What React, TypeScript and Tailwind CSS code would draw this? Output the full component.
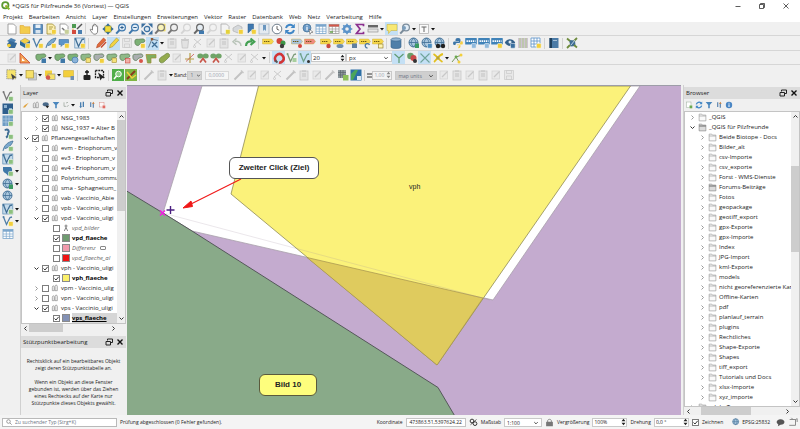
import { useState, type ReactNode } from "react";
import clsx from "clsx";

const BLUE = "#3f78ad";
const YELLOW = "#f2cf3c";
const GREEN = "#6aa84f";
const DISABLED = "#d4d4d4";

type ToolItem = "|" | "v" | "." | [glyph: string, label: string, active?: boolean];

const lens = (color: string, fill = "#e3eef8") => (
  <>
    <circle cx="7" cy="4.5" r="3.4" fill={fill} stroke={color} strokeWidth="1.2" />
    <path d="M4.6 7 1.2 10.6" stroke={color} strokeWidth="2" />
  </>
);
const badge = (color: string) => (
  <rect x="6.5" y="6.5" width="4.7" height="4.7" rx="1" fill={color} stroke="#fff" strokeWidth=".5" />
);
const sheet = (stroke = "#8a8a8a", fill = "#fff") => (
  <path d="M2 1h5.5L10 3.5V11H2z" fill={fill} stroke={stroke} strokeWidth=".8" />
);
const blob = (fill: string, extra?: ReactNode) => (
  <>
    <path d="M1 3.500C1.500 1.500 4 2.600 6 2.200s4.600-.8 4.800 1.400S8.500 5.500 7 6 5.500 9 3.300 8.500.600 6 1 3.500z" fill={fill} stroke="#5d7d58" strokeWidth=".8" />
    {extra}
  </>
);
const tag = (fill: string, extra?: ReactNode) => (
  <>
    <path d="M.5 2h9l2 2.500-2 2.500h-9z" fill={fill} stroke="#c7a42c" strokeWidth=".4" />
    <path d="M2 4.500h6" stroke="#6d5b16" strokeWidth="1.200" strokeDasharray="1.300 .6" />
    {extra}
  </>
);
const vline = (color: string, extra?: ReactNode) => (
  <>
    <path d="M1.500 2 4.500 9.500 8 2.500 10 2" fill="none" stroke={color} strokeWidth="1.300" />
    <circle cx="1.500" cy="2" r="1" fill={color} />
    {extra}
  </>
);
const globe = (extra?: ReactNode) => (
  <>
    <circle cx="5.500" cy="5.500" r="4.500" fill="#a9c6dd" stroke="#3f6d94" strokeWidth=".9" />
    <path d="M1 5.500h9M5.500 1c-3 3-3 6 0 9M5.500 1c3 3 3 6 0 9" fill="none" stroke="#3f6d94" strokeWidth=".8" />
    {extra}
  </>
);
const pencil = (fill: string, edge: string) => (
  <path d="M1.500 10.800 2.500 7.500 8.500 1l2.300 2-6 6.600z" fill={fill} stroke={edge} strokeWidth=".6" />
);
const webLabel = (color: string, b: string) => (
  <>
    <rect x=".2" y="1" width="11.600" height="6.500" rx=".6" fill={color} />
    <path d="M1.500 4.200h9" stroke="#fff" strokeWidth="1.800" strokeDasharray="1.400 .7" />
    {badge(b)}
  </>
);
const table = (color: string) => (
  <>
    <rect x="1" y="1.500" width="10" height="9" fill="#fff" stroke={color} strokeWidth=".8" />
    <path d="M1 2.700h10" stroke={color} strokeWidth="2" />
    <path d="M4.300 3v7.500M7.700 3v7.500M1 6h10M1 8.300h10" stroke={color} strokeWidth=".7" />
  </>
);

const GLYPHS: Record<string, ReactNode> = {
  page: sheet(),
  folder: <path d="M1 2.500h3.500l1 1.300H11v6.700H1z" fill="#f3cc4d" stroke="#dba532" strokeWidth=".6" />,
  save: (
    <>
      <path d="M1.500 1.500h9v9h-9z" fill="#5b8fc0" stroke="#3d6c99" strokeWidth=".7" />
      <path d="M3.500 1.500h5V5h-5z" fill="#e8f0f7" />
      <path d="M3.500 7h5v3.500h-5z" fill="#d9e4ee" />
    </>
  ),
  layout: <>{sheet("#a08a30", "#fbefb0")}<path d="M4 4h4M4 6h3" stroke="#a08a30" strokeWidth=".8" />{badge(YELLOW)}</>,
  layouts: <>{sheet()}<path d="M4 5l6 5.500" stroke="#777" strokeWidth="1.500" />{badge("#c7cf9a")}</>,
  style: (
    <>
      <rect x="1" y="1" width="4" height="4" fill="#4e9a52" />
      <rect x="1" y="7" width="4" height="4" fill="#d34a3b" />
      <path d="M6 6 11 1" stroke="#555" strokeWidth="1.500" />
      <rect x="7" y="7" width="4" height="4" fill="#4a7fb0" />
      <path d="M2 5.500v1.500" stroke="#e0a030" />
    </>
  ),
  hand: (
    <path d="M3.500 7V3.200c0-.9 1.200-.9 1.200 0V1.800c0-.9 1.300-.9 1.300 0v.400c0-.9 1.300-.8 1.300.2v1c0-.8 1.300-.8 1.300.2V8c0 2-1 3.200-2.800 3.200S3.200 10 1.300 7c-.4-.9.900-1.200 1.400-.4z" fill="#fff" stroke="#666" strokeWidth=".8" />
  ),
  pan: (
    <>
      <path d="M6 .3 8.500 3.200h-5zM6 11.700 8.500 8.800h-5zM.3 6l2.900-2.500v5zM11.700 6 8.800 3.500v5z" fill="#2f6b9e" />
      <rect x="3" y="3" width="6" height="6" fill="#f0dc3e" stroke="#8a8a3a" strokeWidth=".6" />
    </>
  ),
  zoomIn: <>{lens(BLUE)}<path d="M5.300 4.500h3.400M7 2.800v3.400" stroke="#2d5f8e" strokeWidth="1" /></>,
  zoomOut: <>{lens(BLUE)}<path d="M5.300 4.500h3.400" stroke="#2d5f8e" strokeWidth="1" /></>,
  zoomFull: (
    <>
      <path d="M.5.500h4.500L.5 5zM11.500.500v4.500L7 .500zM.5 11.500V7L5 11.500zM11.500 11.500H7L11.500 7z" fill="#3b6f9f" />
      <circle cx="6" cy="6" r="2.700" fill="#dce9f4" stroke="#3b6f9f" strokeWidth="1.200" />
    </>
  ),
  zoomSel: <><rect x="4.500" y=".8" width="7" height="7.500" fill="#f3df5a" />{lens("#777", "#faf3b8")}</>,
  zoomLayer: lens("#777", "#efefef"),
  zoomOff: lens(DISABLED, "#f2f2f2"),
  zoomLast: <>{lens("#666", "#e5edf3")}<path d="M6 7.500h5v3.500H6z" fill={BLUE} /></>,
  mapNew: <>{sheet("#a8a8a8", "#f4f4f4")}{badge("#e3d13c")}</>,
  view3d: <><path d="M1 5 6 2l4 2v4L6 10 1 8z" fill="#d5d8db" stroke="#aaa" strokeWidth=".6" />{badge(YELLOW)}</>,
  bookmark: <><path d="M3 1h5.500v9L5.700 7.500 3 10z" fill="#3f78b0" stroke="#2d5a87" strokeWidth=".5" />{badge(YELLOW)}</>,
  bookmarks: <><rect x="1" y="1" width="10" height="10" fill="#e4eaf0" stroke="#9fb0c0" strokeWidth=".7" /><path d="M5 2h3v6L6.500 6.500 5 8z" fill="#6a96bf" /></>,
  clock: <><circle cx="6" cy="6" r="4.800" fill="#fff" stroke="#6f7e8c" /><path d="M6 3v3.200l2.200 1" fill="none" stroke="#555" strokeWidth=".9" /></>,
  refresh: (
    <>
      <path d="M2 5a4.200 4.200 0 0 1 7-2M10 7a4.200 4.200 0 0 1-7 2" fill="none" stroke="#3f86c6" strokeWidth="2" />
      <path d="M10.800.800V5H6.600zM1.200 11.200V7h4.200z" fill="#3f86c6" />
    </>
  ),
  identify: (
    <>
      <circle cx="5" cy="5" r="4" fill="#6b9ac7" stroke="#3f6d94" strokeWidth=".7" />
      <path d="M5 4v3.500M5 2.200v1" stroke="#fff" strokeWidth="1.200" />
      <path d="M7 6l4 3.200-2 .300-1 1.800z" fill="#fff" stroke="#444" strokeWidth=".5" />
    </>
  ),
  table: table("#7ba6cc"),
  calc: <>{table("#999")}<path d="M1 2.500h10" stroke="#d6584a" strokeWidth="2" /><path d="M2 9h3" stroke={GREEN} strokeWidth="1.500" /></>,
  gear: (
    <>
      <circle cx="6" cy="6" r="3" fill="none" stroke="#5b93c9" strokeWidth="2.400" />
      <path d="M6 .700v1.600M6 9.700v1.600M.700 6h1.600M9.700 6h1.600M2.300 2.300l1.100 1.100M8.600 8.600l1.100 1.100M9.700 2.300 8.600 3.400M3.400 8.600 2.300 9.700" stroke="#5b93c9" strokeWidth="1.600" />
    </>
  ),
  sigma: <path d="M9.500 3.200V1.500H2.500L6 6l-3.500 4.500h7V8.800" fill="none" stroke="#8b2f8f" strokeWidth="1.700" />,
  ruler: <><rect x="1" y="2" width="10" height="2.500" fill="#666" /><rect x="1" y="6" width="10" height="3" fill="#e6e6e6" stroke="#888" strokeWidth=".6" /></>,
  tip: <path d="M1 1.500h10v6H5l-2.500 3v-3H1z" fill="#f8e873" stroke="#c9b644" strokeWidth=".6" />,
  action: <>{lens("#7b8c9b")}<circle cx="5" cy="5" r="2" fill="#7b9dbb" /></>,
  text: <><rect x="1.500" y="1.500" width="9" height="9" fill="#fafafa" stroke="#aaa" strokeWidth=".7" /><path d="M3.500 4h5M6 4v5" stroke="#666" /></>,
  manager: (
    <>
      <path d="M1 4 5 1l5 2-3 4z" fill="#4a7fb0" />
      <path d="M1 7 4 4l7 2-2 5H3z" fill="#356a99" />
      <circle cx="3" cy="8.500" r="1.800" fill={YELLOW} />
    </>
  ),
  gpkg: (
    <>
      <path d="M1 4 6 1l5 3-5 3z" fill="#f3cf48" stroke="#777" strokeWidth=".4" />
      <path d="M1 4v4l5 3V7zM11 4v4l-5 3V7z" fill="#2f6b97" />
      {badge(YELLOW)}
    </>
  ),
  shape: vline("#4f7ea6", badge(YELLOW)),
  shapeAdd: vline("#777", badge("#8cc07e")),
  feather: <><path d="M1 11C2 5 6 2 11 1 10 5 6 8 3 8.500" fill="#7ba9ce" stroke="#3f6d94" strokeWidth=".8" />{badge(YELLOW)}</>,
  featherAdd: <><path d="M1 11C2 5 6 2 11 1 10 5 6 8 3 8.500" fill="#7ba9ce" stroke="#3f6d94" strokeWidth=".8" />{badge("#8cc07e")}</>,
  scratch: <><path d="M1 2.500h9.500v5H5l-2 2v-2H1z" fill="#5c94c8" stroke="#3d6f9e" strokeWidth=".6" />{badge(YELLOW)}</>,
  virtual: <><rect x=".8" y="1" width="10" height="10" fill="#dbe8f2" stroke="#5b8bb4" strokeWidth=".7" />{vline("#3f6d94")}{badge(YELLOW)}</>,
  virtualAdd: <><rect x=".8" y="1" width="10" height="10" fill="#c3d9ea" stroke="#5b8bb4" strokeWidth=".7" />{vline("#3f6d94")}{badge("#8cc07e")}</>,
  pencils: <>{pencil("#e06a3c", "#b1421f")}<path d="M6 10.500 11 5" stroke="#c64c33" strokeWidth="1.500" /></>,
  pencil: pencil("#f3d443", "#a5932f"),
  saveOff: <path d="M1.500 1.500h9v9h-9zM3.500 1.500h5v3h-5zM3.500 7h5v3.500h-5z" fill="#e8e8e8" stroke="#cacaca" strokeWidth=".7" />,
  polyAdd: blob("#7db276", badge(YELLOW)),
  vertex: (
    <>
      <path d="M1.500 10.500 5 2l6 1.500" fill="none" stroke="#6b7f8f" />
      <rect x="3.800" y="1" width="2.400" height="2.400" fill="#8c5a3a" />
      <path d="M5 5 10.500 10.500M5 10 10 5" stroke="#3f6d94" strokeWidth="1.300" />
    </>
  ),
  off: <><rect x="2" y="2" width="7.500" height="8" fill="#e9e9e9" stroke={DISABLED} strokeWidth=".8" /><path d="M4 8 9.500 2.500" stroke="#c8c8c8" strokeWidth="1.200" /></>,
  pasteOff: <><rect x="2" y="2" width="8" height="9" fill="#e4e4e4" stroke="#c8c8c8" strokeWidth=".8" /><path d="M4 2h4M4 5h4M4 7h4" stroke="#c2c2c2" /></>,
  trashOff: <path d="M2.500 3.500h7l-.800 7.500H3.300zM2 2.500h8M5 1.300h2" fill="#e2e2e2" stroke="#c6c6c6" strokeWidth=".9" />,
  cutOff: <path d="M2 2l7 6M2 8l7-6M1.500 9.500a1 1 0 1 0 2 0 1 1 0 1 0-2 0" fill="none" stroke="#cacaca" />,
  undo: <path d="M10 9C10 5 7 4 4 4.500M5.500 1.500 2 4.700l3.500 3" fill="none" stroke="#b9c4b9" strokeWidth="1.500" />,
  redo: <path d="M2 9C2 5 5 4 8 4.500M6.500 1.500 10.300 4.700 6.500 8" fill="none" stroke="#44a053" strokeWidth="2.200" />,
  label: tag("#f5d64a"),
  diagram: <><circle cx="4.500" cy="4" r="3" fill="#d3453a" /><circle cx="8" cy="6" r="2.500" fill="#3d9648" /><circle cx="7" cy="9" r="2.200" fill="#3c3c3c" /></>,
  labelPin: tag("#a9c4df", <circle cx="9" cy="9" r="2" fill="#d2443b" />),
  labelRed: tag("#ef8a80"),
  labelA: tag("#f5d64a", <circle cx="8.500" cy="9" r="2.200" fill="#c8473c" />),
  labelB: tag("#f5d64a", <ellipse cx="7" cy="9" rx="3.500" ry="2" fill="#6f8fb0" />),
  labelC: tag("#f5d64a", <rect x="6" y="6.500" width="5" height="4.500" fill="#5f7fa0" />),
  labelD: tag("#f5d64a", <path d="M8.500 11a2.200 2.200 0 1 1 2-3" fill="none" stroke="#4c79a5" strokeWidth="1.300" />),
  labelE: tag("#f5d64a", <rect x="6.500" y="7" width="4.500" height="4" fill="#fff6b0" stroke="#8a7420" strokeWidth=".6" />),
  db: (
    <>
      <path d="M1 2.500v7.500c0 2 10 2 10 0V2.500" fill="#4f7fa9" stroke="#35618a" strokeWidth=".6" />
      <ellipse cx="6" cy="2.500" rx="5" ry="1.700" fill="#8fb3d1" stroke="#35618a" strokeWidth=".6" />
    </>
  ),
  globeSearch: globe(<rect x="7" y="6.500" width="4" height="4.500" fill="#3b9a63" />),
  globeAdd: globe(badge("#4e8fc0")),
  globeFind: globe(<><circle cx="4" cy="9" r="2.200" fill="#222" /><circle cx="9" cy="9" r="2.200" fill="#222" /></>),
  globe: globe(),
  python: (
    <>
      <path d="M6 1C3.500 1 3.500 2 3.500 4H7v.600H2C.800 4.600.800 8 2 8h1.500c0-2 1-2 2.500-2s2.500 0 2.500-2S8.500 1 6 1z" fill="#3d76a8" />
      <path d="M6 11.200c2.500 0 2.500-1 2.500-3H5v-.600h5c1.200 0 1.200-3.300 0-3.300H8.800" fill="#f5cf45" />
    </>
  ),
  webA: webLabel("#3f82b8", "#8fb9dc"),
  webB: webLabel("#3f82b8", YELLOW),
  eye: <><path d="M.800 5.500C3 1 9 1 11.200 5.500 9 10 3 10 .800 5.500z" fill="#35618a" /><circle cx="6" cy="5" r="1.500" fill="#dce8f2" />{badge("#3b6f9f")}</>,
  stripes: <><path d="M1 1h10v10H1z" fill="#cfc3d3" /><path d="M3 1v10M6 1v10M9 1v10" stroke="#b9c7a2" strokeWidth="1.500" /></>,
  grid: <><path d="M1 1h9v9H1zM4 1v9M7 1v9M1 4h9M1 7h9" fill="#fff" stroke="#5b93c9" strokeWidth=".8" />{badge(YELLOW)}</>,
  book: <><rect x="1.500" y="1" width="9" height="10" fill="#4a7aa6" /><rect x="1.500" y="1" width="2.500" height="10" fill="#1f3f5c" /><path d="M5 3.500h4" stroke="#a5c0d8" /></>,
  satellite: <><path d="M3 3l6 .500.500 5.500-5 .500z" fill="#3f6d94" /><path d="M1 1.500 4 4M11 1 8 4M1 11l3-3M8 8l3 2.500" stroke="#6e8b3d" strokeWidth="1.800" /><path d="M5 8 9 3" stroke="#b8d0e2" /></>,
  setSquare: <><path d="M1 1v10h10z" fill="#f1a254" stroke="#c8452f" strokeWidth=".8" /><path d="M3 6v3h3z" fill="#fff" /></>,
  polyA: blob("#7db276", <rect x="6.500" y="6.500" width="4.500" height="4.500" fill="#3f78a8" />),
  polyB: blob("#7db276", <circle cx="8" cy="8" r="3" fill="#8bb3d9" stroke="#4a7fb0" strokeWidth=".8" />),
  polyC: blob("#8fba88", <rect x="6" y="6" width="4.500" height="4.500" fill="#f5e27a" stroke="#a08a30" strokeWidth=".6" />),
  polyD: blob("#aaaeb0", badge(YELLOW)),
  polyE: blob("#8fba88", <rect x="6.500" y="6.500" width="4.500" height="4.500" fill="#f0b0a8" stroke="#c8453a" strokeWidth=".6" />),
  polyF: blob("#aaaeb0", <circle cx="9" cy="9" r="2" fill="#d8554a" />),
  polyG: <path d="M1 2.500h10v3.500H6v5H2.500z" fill="#7fae5c" stroke="#a08a30" strokeWidth=".7" />,
  polyH: <path d="M2 10C0 7 3 5 5 4s4-4 6-2-1 4-3 6-4 4-6 2z" fill="#94ab4e" stroke="#6f8743" strokeWidth=".8" />,
  split: <><path d="M6 1v10M1 7h9" stroke="#b5a24b" strokeWidth="1.200" /><path d="M2 9.500 10 2" stroke="#c8574a" strokeWidth=".8" /></>,
  merge: <><ellipse cx="3.300" cy="4" rx="3" ry="2.500" fill="#6fa467" /><ellipse cx="8.700" cy="4" rx="3" ry="2.500" fill="#6fa467" /><path d="M3 10.500 6 6.500l3 4" fill="none" stroke="#c8574a" strokeWidth="1.700" /></>,
  magnet: <><path d="M3 9.500C-.5 5 6-1 9.500 3.500S8 11 6 10.500" fill="none" stroke="#d23436" strokeWidth="2.600" /><path d="M2 8.500l2.500 2" stroke="#555" strokeWidth="2" /></>,
  snapV: vline("#7d9b7a", <rect x="6.500" y="6" width="4" height="4" fill="#a8cf9f" />),
  snapP: vline("#6fa08a", <circle cx="9.500" cy="9.500" r="1.500" fill="#333" />),
  topo: <path d="M1.500 2 6 6v5M6 6l4.500-4" fill="none" stroke="#5f9a72" strokeWidth="1.200" />,
  overlap: <><circle cx="4.500" cy="4" r="3.300" fill="#6aa06a" /><circle cx="7.500" cy="6" r="3" fill="#c94a4a" /><circle cx="9" cy="9" r="2" fill="#333" /></>,
  cross: <path d="M1.500 1.500l9 9M10.500 1.500l-9 9" stroke="#6fa49a" strokeWidth="1.100" />,
  crossY: <><path d="M1.500 2C5 4 7 8 10.500 10M2 10C5 8 6 3 11 2" fill="none" stroke="#e2c01f" strokeWidth="1.800" /><rect x="4.500" y="4.500" width="3" height="3" fill="#b5a13a" /></>,
  trace: <><path d="M1 10 5 5l6-2M5 5l3 5" fill="none" stroke="#7a9a5a" /><circle cx="5" cy="5" r="1.400" fill={GREEN} /><circle cx="10" cy="3" r="1.500" fill={YELLOW} /><circle cx="8" cy="10" r="1.500" fill={YELLOW} /></>,
  select: <><rect x=".8" y=".8" width="9" height="9" fill="#f6e36a" stroke="#888" strokeWidth=".8" strokeDasharray="1.500 .7" /><path d="M5 4.500l5.500 4-2.500.500-1.200 2.300z" fill="#444" /></>,
  selectForm: <><rect x="3.500" y="4" width="8" height="7" fill="#c9ced3" stroke="#999" strokeWidth=".6" /><rect x="1" y="1.500" width="7.500" height="7.500" fill="#f6e06a" stroke="#a08a30" strokeWidth=".6" /></>,
  deselect: <><rect x="1" y="1.500" width="7" height="6" fill={YELLOW} /><rect x="4" y="5" width="7" height="5.500" fill="#f6e36a" stroke="#888" strokeWidth=".6" /><circle cx="4" cy="8.500" r="2.300" fill="#d3574c" /></>,
  selectLoc: <><path d="M.5 1.500h10v6.500H.5z" fill="#f3cf3c" stroke="#c7a42c" strokeWidth=".5" /><rect x="7.500" y="7" width="3.500" height="4" fill="#6f8fb0" /></>,
  lockB: <><path d="M6 1v6M4 3h4" stroke="#111" strokeWidth="1.300" /><rect x="2.500" y="6" width="7" height="5" rx="1" fill="#222" /></>,
  cursorBox: <><path d="M1.500 1.500h8v7h-8z" fill="none" stroke="#222" strokeWidth="1.300" strokeDasharray="2 .8" /><path d="M4 3.500l7 5-3 .5-1.500 2.500z" fill="#222" /></>,
  greenLens: <><rect width="12" height="12" fill="#4fae49" /><circle cx="6.500" cy="5" r="2.800" fill="#8fce8a" stroke="#fff" /><path d="M4.500 7 2 10" stroke="#fff" strokeWidth="1.500" /></>,
  greenCheck: <><rect width="12" height="12" fill="#7fb542" /><path d="M2 10 10 2" stroke="#8a3b1f" strokeWidth="2" /><path d="M2 3l5 6 4-3" stroke="#f2cf3c" strokeWidth="1.500" /></>,
  wandOff: <><path d="M1.500 10.500 9 3" stroke="#c2c2c2" strokeWidth="2" /><path d="M8 1.500l2.500 2.500" stroke="#c6c6c6" strokeWidth="1.500" /></>,
  rasterA: <><rect x="1" y="1" width="8" height="8" fill="#8f9a9f" /><path d="M1 3.500h8M1 6h8M3.500 1v8M6 1v8" stroke="#5b656b" strokeWidth=".7" /><rect x="6" y="6" width="5.500" height="5.500" fill="#8cbf5a" /></>,
  rasterB: <><rect x=".5" y=".5" width="11" height="11" fill="#2c6fa5" /><path d="M1 5l4-4h3L3 11H1z" fill="#4aa55a" /><rect x="7" y="7" width="4" height="4" fill="#dbe8f2" /></>,
  meshDark: <><rect x=".5" y=".5" width="10.500" height="10.500" fill="#2f5f8d" /><path d="M2 2h3v3H2zM7 5h3v3H7z" fill="#8fb3d1" />{badge("#8cc07e")}</>,
  meshLight: <><rect x=".5" y=".5" width="10.500" height="10.500" fill="#6d9cc4" /><path d="M1 4h10M1 7h10M4 1v10M7 1v10" stroke="#b5cfe4" strokeWidth=".7" />{badge("#8cc07e")}</>,
  comma: <><path d="M3 2.500a2 2 0 1 1 2 3c2 0 1 3-1 4" fill="none" stroke="#3f6d94" strokeWidth="2" />{badge("#8cc07e")}</>,
  dbAdd: <><path d="M1 2h8c1.500 2 1.500 4 0 6l-3 3c-1-3-5-3-5-6z" fill="#3f78a8" />{badge("#8cc07e")}</>,
  brush: <path d="M1 9c2 0 2-2 3.500-3L10 2.500 6 8c-1 2-3 2.500-5 1z" fill="#e0a23c" />,
  group: <path d="M2 10V5c0-3 3-3 3 0v5zM6 10V3.500c0-2.500 3.500-2.500 3.500 0V10z" fill="#f0f0f0" stroke="#8a8a8a" strokeWidth="1" />,
  eyeSm: <><ellipse cx="5.500" cy="5" rx="4.500" ry="3" fill="#4a6a8a" /><path d="M5 7h6L8 11z" fill="#222" /></>,
  funnel: <path d="M1 1.500h10L7.200 6v5H4.800V6z" fill="#4a86bd" />,
  expr: <path d="M3 2v6h3M6 3l3-1M7 9l3-3" fill="none" stroke="#8f9a8f" />,
  expand: <><path d="M4 2v7M8 1v8" stroke="#4a7fb0" strokeWidth="2" /><path d="M2 8l2 3 2-3z" fill="#4a7fb0" /></>,
  collapse: <><path d="M4 2v7M8 3v7" stroke="#6b8fb5" strokeWidth="2" /><path d="M6 4l2-3 2 3z" fill="#d0803a" /></>,
  remove: <><rect x="2" y="2" width="7" height="7" fill="#fdf6f6" stroke="#d9928b" strokeWidth=".8" />{badge("#e06a62")}</>,
  addLayer: <><rect x="2" y="1.500" width="7" height="8.500" fill="#fff" stroke="#9fb09f" strokeWidth=".8" />{badge(GREEN)}</>,
  info: <><circle cx="6" cy="6" r="4.800" fill="#4a86c4" /><path d="M6 5v4M6 2.800v1.200" stroke="#fff" strokeWidth="1.500" /></>,
  satBar: <><circle cx="4" cy="4" r="2.500" fill="none" stroke="#333" strokeWidth="1.300" /><circle cx="8" cy="7.500" r="2.500" fill="none" stroke="#333" strokeWidth="1.300" /><path d="M2 9 10 2" stroke="#333" /></>,
  lock: <><rect x="1.500" y="5" width="9" height="6" rx=".5" fill="#777" /><path d="M3.500 5.500V4c0-3 5-3 5 0v1.500" fill="none" stroke="#888" strokeWidth="1.300" /></>,
  bubble: <path d="M6 1.500c7 0 7 7.500 0 7.500l-3.500 2 .600-2.500C-1 6.500 1 1.500 6 1.500z" fill="#555" />,
  log: <path d="M2 3h7v7H1.500M9 3l2-1v4M4 1l2 2" fill="none" stroke="#777" />,
  folderGrey: <path d="M1.500 1.500H5l1 1.300h4.500v7.700h-9zM1.500 4h9" fill="#fafafa" stroke="#9b9b9b" strokeWidth=".9" />,
  folderHome: <><path d="M1.500 1.500H5l1 1.300h4.500v7.700h-9z" fill="#dcdcdc" stroke="#8b8b8b" strokeWidth=".9" /><path d="M1.500 4h9" stroke="#777" strokeWidth="1.500" /></>,
  points: <><circle cx="6" cy="3" r="1.500" fill="none" stroke="#666" strokeWidth="1.200" /><path d="M3.500 10.500 6 5l2.500 5.500" fill="none" stroke="#666" strokeWidth="1.200" /></>,
};

const MENU = ["Projekt", "Bearbeiten", "Ansicht", "Layer", "Einstellungen", "Erweiterungen", "Vektor", "Raster", "Datenbank", "Web", "Netz", "Verarbeitung", "Hilfe"];

const ROW_PROJECT: ToolItem[] = [
  ["page", "Neu"], ["folder", "Öffnen"], ["save", "Speichern"], ["layout", "Neues Layout"], ["layouts", "Layouts"], ["style", "Stile"], "|",
  ["hand", "Verschieben"], ["pan", "Zur Auswahl"], ["zoomIn", "Hineinzoomen"], ["zoomOut", "Herauszoomen"], ["zoomFull", "Volle Ausdehnung"],
  ["zoomSel", "Auf Auswahl zoomen"], ["zoomLayer", "Auf Layer zoomen"], ["zoomOff", "Native Auflösung"], ["zoomLast", "Zoom zurück"], ["zoomOff", "Zoom vor"],
  ["mapNew", "Neue Kartenansicht"], ["view3d", "Neue 3D-Ansicht"], ["bookmark", "Neues Lesezeichen"], ["bookmarks", "Lesezeichen"], ["clock", "Zeitsteuerung"], ["refresh", "Aktualisieren"], "|",
  ["identify", "Objekte abfragen"], ["table", "Attributtabelle"], ["calc", "Feldrechner"], ["gear", "Werkzeugkiste"], ["sigma", "Statistik"], ["ruler", "Messen"], "v",
  ["tip", "Kartenhinweise", true], ["action", "Aktion"], "v", ["text", "Textanmerkung"], "v",
];
const ROW_EDIT: ToolItem[] = [
  ["manager", "Datenquellen"], ["gpkg", "Neues GeoPackage"], ["shape", "Neues Shapefile"], ["feather", "Neuer SpatiaLite-Layer"], ["scratch", "Temporärer Layer"], ".", ["virtual", "Virtueller Layer"], "|", ".",
  ["pencils", "Aktuelle Änderungen"], ["pencil", "Bearbeitung umschalten", true], ["saveOff", "Layeränderungen speichern"], ["polyAdd", "Polygon hinzufügen"], ["vertex", "Stützpunktwerkzeug", true], "v",
  ["pasteOff", "Attribute ändern"], ["trashOff", "Löschen"], ["cutOff", "Ausschneiden"], ["off", "Kopieren"], ["pasteOff", "Einfügen"], ["undo", "Rückgängig"], ["redo", "Wiederholen"], "|",
  ["label", "Beschriftung"], ["diagram", "Diagramme"], ".", ["labelPin", "Beschriftung anheften"], ["labelRed", "Nicht platziert"], ".",
  ["labelA", "Anheften"], ["labelB", "Anzeigen"], ["labelC", "Beschriftung verschieben"], ["labelD", "Beschriftung drehen"], ["labelE", "Beschriftung ändern"], "|",
  ["db", "DB-Verwaltung"], "|", ["globeSearch", "Metasuche"], ["globeAdd", "Dienst hinzufügen"], ["globeFind", "Dienst suchen"], "|",
  ["python", "Python-Konsole"], ["webA", "HTML-Export"], ["webA", "CSV-Export"], ["webB", "KML-Export"], ["eye", "Vorschau"], ["stripes", "Streifen"], ["grid", "Raster anlegen"], "|",
  ["book", "Handbuch"], "|", ["satellite", "GPS"],
];
const ROW_DIGITIZE: ToolItem[] = [
  ["off", "CAD"], ["setSquare", "Erweiterte Digitalisierung"], ".", ["polyA", "Objekt verschieben"], "v", ["polyA", "Objekt drehen"], ["polyB", "Vereinfachen"],
  ["polyC", "Ring hinzufügen"], ["polyD", "Teil hinzufügen"], ["polyC", "Ring füllen"], ["polyE", "Ring löschen"], ["polyF", "Teil löschen"], ["polyG", "Umformen"], ["polyH", "Versatz"],
  ["off", "Linie umkehren"], ["split", "Objekt trennen"], ["merge", "Objekte verschmelzen"], ["merge", "Attribute verschmelzen"], ["cutOff", "Symbole drehen"], ["off", "Symbole verschieben"], ["cutOff", "Kürzen"], "v", "|",
];
const ROW_SNAP: ToolItem[] = [["magnet", "Einrasten", true], ["snapV", "Einrastmodus"], ["snapP", "Stützpunkt", true]];
const ROW_TOPO: ToolItem[] = [
  ["topo", "Topologisches Bearbeiten", true], ["overlap", "Überlappung"], ["cross", "Auf Schnittpunkt einrasten", true], ["crossY", "Selbsteinrasten"], "v", ["trace", "Spurverfolgung"],
];
const ROW_SELECT: ToolItem[] = [
  ["select", "Objekte wählen"], "v", ["selectForm", "Nach Wert wählen"], "v", ["deselect", "Auswahl aufheben"], "v", ["selectLoc", "Räumlich wählen"], "|",
  ["lockB", "Sperren"], ["cursorBox", "Auswahlrahmen"], "|", ["greenLens", "Suchen"], ["greenCheck", "Prüfen"], "|", ["wandOff", "Zauberstab"], ["pasteOff", "Rasterlayer"], "v",
];
const ROW_RASTER: ToolItem[] = [
  ".", ["wandOff", "Zeichnen"], ["off", "Linie"], ["off", "Polygon"], ["cutOff", "Schnitt"], ["wandOff", "Pipette"], ["pasteOff", "Werte"], ["off", "Filter"], ["wandOff", "Radieren"],
  ["rasterA", "Rasterwerte"], ["rasterB", "Rasterfarben"], "|",
];
const ROW_MESH: ToolItem[] = [
  ["off", "Netz digitalisieren"], ["pasteOff", "Netz wählen"], ["off", "Netz umformen"], ["pasteOff", "Netz glätten"], ["off", "Netz teilen"], ["saveOff", "Netz speichern"],
];
const SIDE_TOOLS: ToolItem[] = [
  ["shapeAdd", "Vektorlayer"], ["meshDark", "Rasterlayer"], ["meshLight", "Netzlayer"], ["comma", "Textdatei"], ["featherAdd", "SpatiaLite"], ["virtualAdd", "Virtuell"],
  ["dbAdd", "PostGIS"], ["globeSearch", "WMS"], ["globe", "WCS"], ["virtualAdd", "WFS"], ["shape", "Neu"], ["table", "Tabelle"],
];
const SIDE_MENUS = [6, 7, 9, 10];

interface LayerRow {
  name: string;
  level: 0 | 1 | 2;
  checked?: boolean;
  open?: boolean;
  swatch?: string;
  icon?: string;
  style?: "bold" | "italic";
  selected?: boolean;
}

const LAYERS: LayerRow[] = [
  { name: "NSG_1982", level: 1, checked: true },
  { name: "NSG_1983", level: 1, checked: true },
  { name: "NSG_1937 = Alter B", level: 1, checked: true },
  { name: "Pflanzengesellschaften", level: 0, checked: true, open: true },
  { name: "evm - Eriophorum_v", level: 1 },
  { name: "ev3 - Eriophorum_v", level: 1 },
  { name: "ev4 - Eriophorum_v", level: 1 },
  { name: "Polytrichum_commu", level: 1 },
  { name: "sma - Sphagnetum_", level: 1 },
  { name: "vab - Vaccinio_Abie", level: 1 },
  { name: "vpb - Vaccinio_uligi", level: 1 },
  { name: "vpd - Vaccinio_uligi", level: 1, checked: true, open: true },
  { name: "vpd_bilder", level: 2, icon: "points", style: "italic" },
  { name: "vpd_flaeche", level: 2, checked: true, swatch: "bg-[#6f9b71]", style: "bold" },
  { name: "Differenz", level: 2, swatch: "bg-[#f29bad]", style: "italic" },
  { name: "vpd_flaeche_al", level: 2, swatch: "bg-[#f01414]", style: "italic" },
  { name: "vph - Vaccinio_uligi", level: 1, checked: true, open: true },
  { name: "vph_flaeche", level: 2, checked: true, swatch: "bg-[#fbf06a]", style: "bold" },
  { name: "vpm - Vaccinio_ulig", level: 1 },
  { name: "vpn - Vaccinio_uligi", level: 1 },
  { name: "vps - Vaccinio_uligi", level: 1, checked: true, open: true },
  { name: "vps_flaeche", level: 2, checked: true, swatch: "bg-[#8391b5]", style: "bold", selected: true },
];

const FOLDERS = [
  "Beide Biotope - Docs", "Bilder_alt", "csv-Importe", "csv_exporte", "Forst - WMS-Dienste", "Forums-Beiträge", "Fotos", "geopackage",
  "geotiff_export", "gpx-Exporte", "gpx-Importe", "Index", "JPG-Import", "kml-Exporte", "models", "nicht georeferenzierte Kar", "Offline-Karten",
  "pdf", "planlauf_terrain", "plugins", "Rechtliches", "Shape-Exporte", "Shapes", "tiff_export", "Tutorials und Docs", "xlsx-Importe", "xyz_importe",
];

function Glyph({ name, className = "size-[12px]" }: { name: string; className?: string }) {
  return (
    <svg viewBox="0 0 12 12" className={clsx("shrink-0", className)} fill="none" aria-hidden="true">
      {GLYPHS[name]}
    </svg>
  );
}

function Tools({ items }: { items: ToolItem[] }) {
  return (
    <>
      {items.map((item, i) => {
        if (item === "|") return <span key={i} className="mx-[2px] h-[11px] w-px shrink-0 bg-[#d2d2d2]" />;
        if (item === ".") return <span key={i} className="w-[3px] shrink-0" />;
        if (item === "v") return <Arrow key={i} />;
        const [glyph, label, active] = item;
        return (
          <button
            key={i}
            type="button"
            aria-label={label}
            className={clsx("grid h-[13px] w-[13px] shrink-0 place-items-center", active && "bg-[#c4e0f5]")}
          >
            <Glyph name={glyph} />
          </button>
        );
      })}
    </>
  );
}

function Arrow() {
  return (
    <svg viewBox="0 0 6 6" className="size-[6px] shrink-0" aria-hidden="true">
      <path d="M1 2h4L3 4.500z" fill="#111" />
    </svg>
  );
}

function Chevron({ dir, className = "size-[7px]" }: { dir: "right" | "down" | "up" | "left"; className?: string }) {
  const paths = { right: "M2.500 1.500 4.500 3.500 2.500 5.500", left: "M4.500 1.500 2.500 3.500 4.500 5.500", down: "M1.500 2.500 3.500 4.500 5.500 2.500", up: "M1.500 4.500 3.500 2.500 5.500 4.500" };
  return (
    <svg viewBox="0 0 7 7" className={clsx("shrink-0", className)} fill="none" aria-hidden="true">
      <path d={paths[dir]} stroke={dir === "right" ? "#999" : "#333"} strokeWidth="1" />
    </svg>
  );
}

function Spin({ label, value, className, disabled }: { label: string; value: string; className: string; disabled?: boolean }) {
  return (
    <span className={clsx("flex h-[9px] shrink-0 items-center border border-[#c9c9c9]", disabled ? "bg-[#f4f4f4] text-gray-400" : "bg-white", className)}>
      <input aria-label={label} defaultValue={value} disabled={disabled} className="w-full min-w-0 flex-1 bg-transparent px-px outline-none" />
      <svg viewBox="0 0 5 8" className="h-[8px] w-[5px] shrink-0" aria-hidden="true">
        <path d="M.5 3.200 2.500.800l2 2.400zM.5 4.800h4l-2 2.400z" fill={disabled ? "#888" : "#222"} />
      </svg>
    </span>
  );
}

function Picker({ label, options, className, disabled }: { label: string; options: string[]; className: string; disabled?: boolean }) {
  return (
    <span className={clsx("grid h-[9px] shrink-0 items-center border border-[#c9c9c9]", disabled ? "bg-[#cfcfcf] text-gray-500" : "bg-white", className)}>
      <select aria-label={label} disabled={disabled} className="col-start-1 row-start-1 w-full appearance-none bg-transparent px-[2px] outline-none">
        {options.map((o) => <option key={o}>{o}</option>)}
      </select>
      <Chevron dir="down" className="pointer-events-none col-start-1 row-start-1 mr-[2px] size-[6px] justify-self-end" />
    </span>
  );
}

function Tick({ label, checked = false }: { label: string; checked?: boolean }) {
  const [on, setOn] = useState(checked);
  return (
    <span className="grid shrink-0 place-items-center">
      <input
        type="checkbox"
        aria-label={label}
        checked={on}
        onChange={() => setOn(!on)}
        className="col-start-1 row-start-1 size-[7px] appearance-none border border-[#7d7d7d] bg-white"
      />
      {on && (
        <svg viewBox="0 0 7 7" className="pointer-events-none col-start-1 row-start-1 size-[7px]" fill="none" aria-hidden="true">
          <path d="M1.500 3.500 3 5l2.700-3.200" stroke="#222" strokeWidth=".9" />
        </svg>
      )}
    </span>
  );
}

function DockTitle({ title }: { title: string }) {
  return (
    <div className="flex h-[12px] shrink-0 items-center bg-[#dcdcdc] px-[2px] text-[6px]">
      <h2 className="flex-1">{title}</h2>
      <button type="button" aria-label={`${title} lösen`} className="mr-[3px]">
        <svg viewBox="0 0 8 8" className="size-[8px]" fill="none" stroke="#222" aria-hidden="true">
          <path d="M2.500 2.500v-1.500h5v3.500h-2M1 3.500h4.500v3.500H1z" />
        </svg>
      </button>
      <button type="button" aria-label={`${title} schließen`}>
        <svg viewBox="0 0 8 8" className="size-[8px]" stroke="#111" strokeWidth="1.400" aria-hidden="true">
          <path d="M1.500 1.500l5 5M6.500 1.500l-5 5" />
        </svg>
      </button>
    </div>
  );
}

function VScroll({ thumb }: { thumb: string }) {
  return (
    <div className="flex w-[8px] shrink-0 flex-col items-center bg-[#f0f0f0] py-px">
      <Chevron dir="up" />
      <div className="flex w-full flex-1 flex-col">
        <div className={clsx("w-full bg-[#cdcdcd]", thumb)} />
      </div>
      <Chevron dir="down" />
    </div>
  );
}

function HScroll({ thumb }: { thumb: string }) {
  return (
    <div className="flex h-[8px] shrink-0 items-center bg-[#f0f0f0] px-px">
      <Chevron dir="left" />
      <div className="flex h-full flex-1">
        <div className={clsx("h-full bg-[#cdcdcd]", thumb)} />
      </div>
      <svg viewBox="0 0 7 7" className="mr-[8px] size-[7px]" fill="none" aria-hidden="true">
        <path d="M2.500 1.500 4.500 3.500 2.500 5.500" stroke="#333" />
      </svg>
    </div>
  );
}

function LayerItem({ row }: { row: LayerRow }) {
  return (
    <li className={clsx("flex h-[10px] shrink-0 items-center gap-[2px] whitespace-nowrap", row.level === 0 && "pl-px", row.level === 1 && "pl-[11px]", row.level === 2 && "pl-[31px]")}>
      {row.level < 2 && <Chevron dir={row.open ? "down" : "right"} />}
      <Tick label={row.name} checked={row.checked} />
      {row.swatch ? <span className={clsx("size-[8px] shrink-0 border border-[#8a8a8a]", row.swatch)} /> : <Glyph name={row.icon ?? "group"} className="size-[8px]" />}
      <span
        className={clsx(
          "leading-[10px]",
          row.style === "bold" && "font-bold text-black",
          row.style === "italic" && "italic text-[#666]",
          row.selected && "flex-1 bg-[#d6d6d6] underline"
        )}
      >
        {row.name}
      </span>
      {row.name === "Differenz" && <span className="ml-[2px] h-[4px] w-[6px] rounded-[1px] border border-[#888]" />}
    </li>
  );
}

function FolderItem({ name, nested, open, home }: { name: string; nested?: boolean; open?: boolean; home?: boolean }) {
  return (
    <li className={clsx("flex h-[10px] shrink-0 items-center gap-[2px] whitespace-nowrap", nested ? "pl-[14px]" : "pl-[4px]")}>
      <Chevron dir={open ? "down" : "right"} />
      <Glyph name={home ? "folderHome" : "folderGrey"} className="size-[9px]" />
      <span className="leading-[10px]">{name}</span>
    </li>
  );
}

function MapCanvas() {
  return (
    <main className="relative min-w-0 flex-1 overflow-hidden border-t border-[#9d9da8] bg-[#c4abcf] font-['Liberation_Sans',sans-serif] text-[#222]">
      <svg viewBox="0 0 554 329" preserveAspectRatio="xMinYMin slice" className="absolute inset-0 size-full" aria-hidden="true">
        <path d="M75 0 36 127 65 145 366 214 513 0z" fill="#fff" stroke="#a8a0ab" strokeWidth=".8" />
        <path d="M131.500 0 104 108 310 279 503.500 0z" fill="#fbf27a" stroke="#8f8a55" strokeWidth=".8" />
        <path d="M180 171.500 310 279 356 212z" fill="#dfcb5e" stroke="#a3914f" strokeWidth=".7" />
        <path d="M36 127 363 214" stroke="#a08ca0" strokeOpacity=".3" strokeWidth=".7" fill="none" />
        <path d="M-2 104 36 127 65 145 311 301.500 329 332H-2z" fill="#89aa89" stroke="#55585a" strokeWidth="1" />
        <path d="M114 93 62 119" stroke="#f01818" strokeWidth="1.200" />
        <path d="M56 122l8-7 1.500 5.500z" fill="#f01818" stroke="#f01818" />
        <path d="M33 124.500l5 5M38 124.500l-5 5" stroke="#f020e0" strokeWidth="1.600" />
        <path d="M39.500 124h8M43.500 120v8" stroke="#4a1f80" strokeWidth="1.400" />
      </svg>
      <span className="absolute left-[282px] top-[96px] text-[7px] leading-[10px]">vph</span>
      <div className="absolute left-[102px] top-[71px] flex h-[22px] w-[90px] items-center justify-center rounded-[6px] border border-[#555] bg-white text-[8px] font-bold">
        Zweiter Click (Ziel)
      </div>
      <div className="absolute left-[132px] top-[288px] flex h-[22px] w-[58px] items-center justify-center rounded-[6px] border border-[#5a5a3c] bg-[#fefe7d] text-[8px] font-bold">
        Bild 10
      </div>
    </main>
  );
}

export default function App() {
  return (
    <div className="flex h-screen flex-col overflow-hidden bg-[#f0f0f0] font-['Open_Sans','Noto_Sans',sans-serif] text-[6px] leading-[8px] text-[#222]">
      <header className="shrink-0 bg-white">
        <div className="flex h-[11px] items-center pl-px pr-[10px]">
          <svg viewBox="0 0 10 10" className="size-[9px]" fill="none" aria-hidden="true">
            <circle cx="4.800" cy="4.800" r="3.500" stroke="#5c9a32" strokeWidth="2" />
            <path d="M5 5l4.300 4.300" stroke="#88b832" strokeWidth="2.200" />
            <path d="M5 5h1.800L5 6.800z" fill="#ee9a2d" />
          </svg>
          <h1 className="ml-[2px] flex-1">*QGIS für Pilzfreunde 36 (Vortest) — QGIS</h1>
          <div className="flex gap-[16px]">
            <button type="button" aria-label="Minimieren">
              <svg viewBox="0 0 8 8" className="size-[8px]" stroke="#333" strokeWidth=".8"><path d="M1.500 4.500h5" /></svg>
            </button>
            <button type="button" aria-label="Verkleinern">
              <svg viewBox="0 0 8 8" className="size-[8px]" stroke="#333" strokeWidth=".8" fill="none"><path d="M1.500 2.500h4v4h-4zM2.500 2.500v-1h4v4h-1" /></svg>
            </button>
            <button type="button" aria-label="Beenden">
              <svg viewBox="0 0 8 8" className="size-[8px]" stroke="#333" strokeWidth=".8"><path d="M1.500 1.500l5 5M6.500 1.500l-5 5" /></svg>
            </button>
          </div>
        </div>
        <nav className="flex h-[11px] items-center">
          {MENU.map((m) => (
            <button key={m} type="button" className="px-[3px]">{m}</button>
          ))}
        </nav>
      </header>

      <div className="shrink-0 divide-y divide-[#d6d6d6]">
        <div className="flex h-[14px] items-center pl-[5px]"><Tools items={ROW_PROJECT} /></div>
        <div className="flex h-[15px] items-center pl-[5px]"><Tools items={ROW_EDIT} /></div>
        <div className="flex h-[14px] items-center pl-[5px]">
          <Tools items={ROW_DIGITIZE} />
          <Tools items={ROW_SNAP} />
          <Spin label="Toleranz" value="20" className="w-[35px]" />
          <Picker label="Einheit" options={["px", "m"]} className="w-[46px]" />
          <Tools items={ROW_TOPO} />
        </div>
        <div className="flex h-[20px] items-center pl-[5px] text-[5px]">
          <Tools items={ROW_SELECT} />
          <label htmlFor="band">Band:</label>
          <span className="flex h-[9px] w-[15px] shrink-0 items-center justify-between border border-[#c9c9c9] bg-[#d4d4d4] text-gray-500">
            <input id="band" defaultValue="1" disabled className="w-[7px] bg-transparent pl-[2px]" />
            <Chevron dir="down" className="size-[5px]" />
          </span>
          <input aria-label="Wert" defaultValue="0,0000" disabled className="ml-[3px] h-[9px] w-[24px] shrink-0 border border-[#d9d9d9] bg-[#f6f6f6] px-[2px] text-gray-400" />
          <Tools items={ROW_RASTER} />
          <svg viewBox="0 0 5 5" className="size-[5px] shrink-0" aria-hidden="true"><path d="M0 1h5M0 4h5" stroke="#333" /></svg>
          <Spin label="Breite" value="1,00" className="w-[20px]" disabled />
          <span className="w-[3px] shrink-0" />
          <Picker label="Karteneinheit" options={["map units"]} className="w-[42px]" disabled />
          <Tools items={ROW_MESH} />
        </div>
      </div>

      <div className="flex min-h-0 flex-1">
        <div className="w-[20px] shrink-0 pt-[5px]">
          <div className="flex h-[150px] flex-col justify-between">
            {SIDE_TOOLS.map((item, i) => (
              <div key={i} className="flex h-[12px] items-center pl-px">
                <Tools items={[item]} />
                {SIDE_MENUS.includes(i) && <Arrow />}
              </div>
            ))}
          </div>
        </div>

        <aside className="mr-px flex w-[106px] shrink-0 flex-col border-l border-[#d0d0d0] pt-[2px]">
          <DockTitle title="Layer" />
          <div className="flex h-[12px] shrink-0 items-center gap-[2px] pl-px">
            {["brush", "group", "eyeSm", "funnel", "expr", "expand", "collapse", "remove"].map((g) => (
              <button key={g} type="button" aria-label={g} className="flex items-center">
                <Glyph name={g} className="size-[8px]" />
                {g === "expr" && <Arrow />}
              </button>
            ))}
          </div>
          <div className="flex h-[213px] shrink-0 border border-[#c4c4c4] bg-white">
            <ul className="flex min-w-0 flex-1 flex-col justify-end overflow-hidden">
              {LAYERS.map((row) => <LayerItem key={row.name} row={row} />)}
            </ul>
            <VScroll thumb="h-[91px]" />
          </div>
          <HScroll thumb="w-[34px]" />
          <div className="h-[4px] shrink-0" />
          <DockTitle title="Stützpunktbearbeitung" />
          <div className="flex flex-col gap-[7px] px-[2px] pt-[10px] text-center text-[5px] leading-[7px]">
            <p>Rechtsklick auf ein bearbeitbares Objekt zeigt deren Stützpunkttabelle an.</p>
            <p>Wenn ein Objekt an diese Fenster gebunden ist, werden über das Ziehen eines Rechtecks auf der Karte nur Stützpunkte dieses Objekts gewählt.</p>
          </div>
        </aside>

        <MapCanvas />

        <aside className="ml-[2px] flex w-[117px] shrink-0 flex-col border-l border-[#d0d0d0] pt-[2px]">
          <DockTitle title="Browser" />
          <div className="flex h-[12px] shrink-0 items-center gap-[2px] pl-px">
            {["addLayer", "refresh", "funnel", "collapse", "info"].map((g) => (
              <button key={g} type="button" aria-label={g}><Glyph name={g} className="size-[8px]" /></button>
            ))}
          </div>
          <div className="flex min-h-0 flex-1 border border-[#c4c4c4] bg-white">
            <ul className="min-w-0 flex-1 overflow-hidden">
              <FolderItem name="_QGIS" />
              <FolderItem name="_QGIS für Pilzfreunde" open home />
              {FOLDERS.map((f) => <FolderItem key={f} name={f} nested home={f === "Forums-Beiträge"} />)}
              <FolderItem name="adobeTemp" />
            </ul>
            <VScroll thumb="mt-[46px] h-[86px]" />
          </div>
          <HScroll thumb="ml-[9px] w-[50px]" />
        </aside>
      </div>

      <footer className="flex h-[14px] shrink-0 items-center bg-[#f4f4f4] px-[2px] text-[5px]">
        <label className="flex h-[9px] w-[115px] shrink-0 items-center gap-[3px] border border-[#b9b9b9] bg-white px-[3px]">
          <svg viewBox="0 0 6 6" className="size-[6px] shrink-0" fill="none" stroke="#777" strokeWidth=".7" aria-hidden="true">
            <circle cx="2.500" cy="2.500" r="1.800" /><path d="M4 4l1.700 1.700" />
          </svg>
          <input aria-label="Suche" placeholder="Zu suchender Typ (Strg+K)" className="min-w-0 flex-1 outline-none placeholder:text-gray-500" />
        </label>
        <p className="ml-[3px] flex-1 whitespace-nowrap">Prüfung abgeschlossen (0 Fehler gefunden).</p>
        <div className="flex shrink-0 items-center gap-[3px]">
          <label htmlFor="coord">Koordinate</label>
          <input id="coord" defaultValue="473863.51,5397624.22" className="h-[9px] w-[60px] border border-[#c4c4c4] bg-white px-px text-center" />
          <Glyph name="satBar" className="size-[9px]" />
          <span>Maßstab</span>
          <Picker label="Maßstab" options={["1:100", "1:500"]} className="w-[38px]" />
          <Glyph name="lock" className="size-[9px]" />
          <span>Vergrößerung</span>
          <Spin label="Vergrößerung" value="100%" className="w-[35px]" />
          <span>Drehung</span>
          <Spin label="Drehung" value="0,0 °" className="w-[35px]" />
          <Tick label="Zeichnen" checked />
          <span>Zeichnen</span>
          <button type="button" className="ml-[6px] flex items-center gap-[2px]"><Glyph name="globe" className="size-[8px]" />EPSG:25832</button>
          <button type="button" aria-label="Meldungen" className="ml-[3px]"><Glyph name="bubble" className="size-[9px]" /></button>
          <button type="button" aria-label="Protokoll"><Glyph name="log" className="size-[10px]" /></button>
        </div>
      </footer>
    </div>
  );
}
